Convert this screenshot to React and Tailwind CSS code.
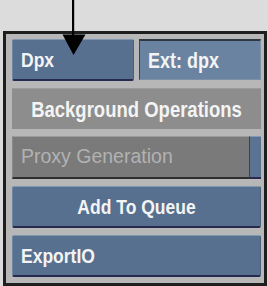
import React from 'react'

// taller, condensed-looking label like the original UI font
function Label({ children, className = '' }) {
  return (
    <span className={`inline-block whitespace-nowrap scale-y-[1.18] translate-y-[1px] font-bold leading-none ${className}`}>
      {children}
    </span>
  )
}

// blue raised button, as in the Discreet-style export panel
function BlueButton({ children, center = false, className = '' }) {
  return (
    <div
      className={`h-[42px] flex items-center bg-[#57708f] border-t border-t-[#7f96b2] border-l border-l-[#6d84a2] border-r border-r-[#4b607c] border-b-2 border-b-[#272a50] rounded-[2px] text-[#f4f4f4] ${center ? 'justify-center' : 'pl-[8px]'} ${className}`}
    >
      <Label className="text-[17.5px]">{children}</Label>
    </div>
  )
}

export default function App() {
  return (
    <div className="relative w-[268px] h-[286px] bg-[#dcdcdc] pt-[31px] pl-[3px] pr-[1px] overflow-hidden font-['Liberation_Sans',Arial,sans-serif]">
      <div className="h-[255px] border-[3px] border-[#1e1e1e] bg-[#b7b7b7] pt-[5px] pl-[6px] pr-[3px] flex flex-col gap-[7px]">
        {/* format row */}
        <div className="flex gap-[5px]">
          <BlueButton className="w-[122px]">Dpx</BlueButton>
          <div className="w-[122px] h-[41px] flex items-center pl-[8px] bg-[#6983a1] border-t-2 border-t-[#2f3742] border-l border-l-[#3b4552] border-r border-r-[#8193a8] border-b border-b-[#7b8fa6] text-[#f4f4f4]">
            <Label className="text-[18px]">Ext: dpx</Label>
          </div>
        </div>

        <div className="h-[41px] flex items-center justify-center bg-[#8d8d8d] border-t border-t-[#9a9a9a] text-[#f4f4f4]">
          <Label className="text-[18.5px]">Background Operations</Label>
        </div>

        {/* disabled proxy toggle */}
        <div className="h-[43px] flex">
          <div className="flex-1 flex items-center pl-[8px] bg-[#7a7a7a] border-t border-t-[#9b9b9b] border-l border-l-[#8a8a8a] border-b-2 border-b-[#2e2e2e] text-[#b2b2b2]">
            <span className="inline-block whitespace-nowrap scale-y-[1.05] text-[19.5px] leading-none">Proxy Generation</span>
          </div>
          <div className="w-[12px] bg-[#5b7393] border-l border-l-[#3c3f55] border-t border-t-[#8197b3] border-b-2 border-b-[#272a50]"></div>
        </div>

        <BlueButton center>Add To Queue</BlueButton>
        <BlueButton>ExportIO</BlueButton>
      </div>

      {/* pointer arrow */}
      <svg className="absolute left-0 top-0" width="268" height="60" viewBox="0 0 268 60">
        <rect x="72" y="0" width="2.2" height="36" fill="#000" />
        <polygon points="62.5,34.5 85.5,34.5 73.5,55" fill="#000" />
      </svg>
    </div>
  )
}
